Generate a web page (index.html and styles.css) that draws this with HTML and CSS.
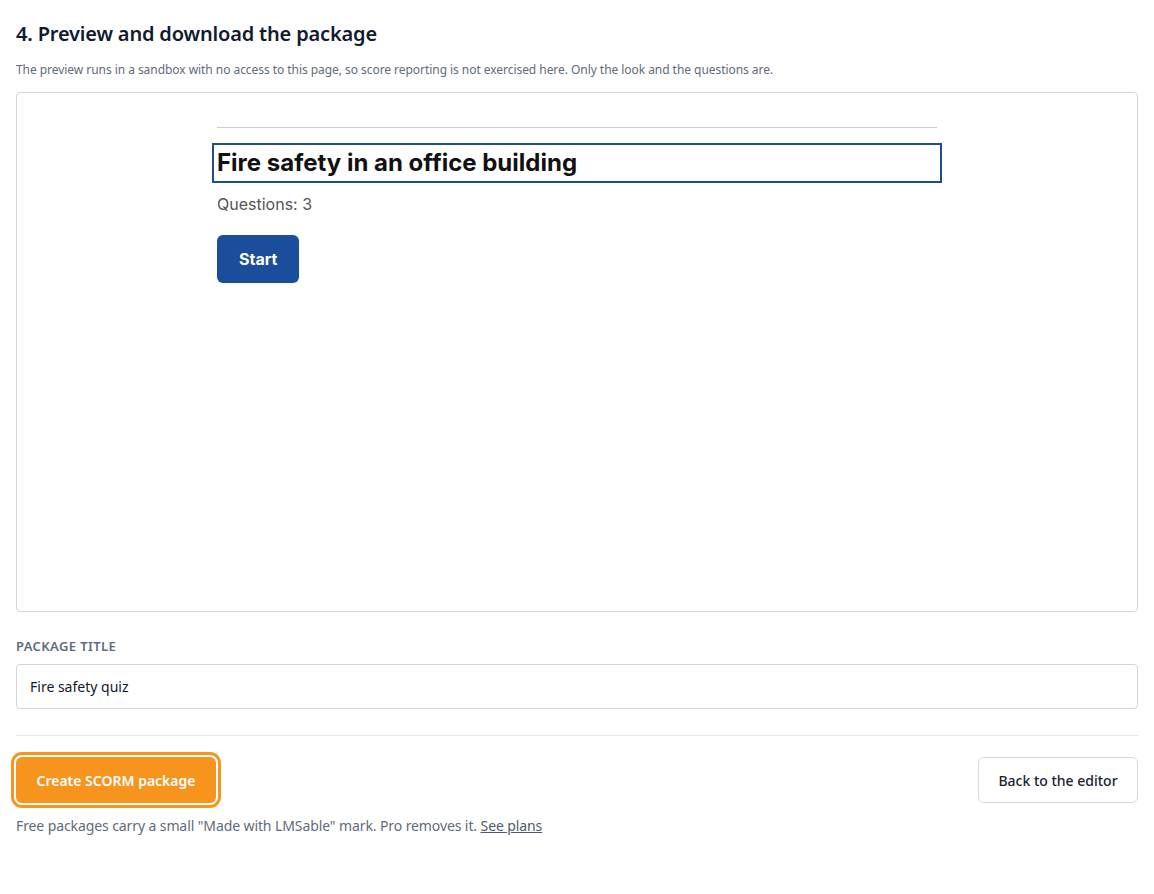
FILE: index.html
```html
<!DOCTYPE html>
<html lang="en">
<head>
<meta charset="utf-8">
<title>Preview and download the package</title>
<link rel="stylesheet" href="styles.css">
</head>
<body>
<main class="page">
  <h2 class="step-title">4. Preview and download the package</h2>
  <p class="step-note">The preview runs in a sandbox with no access to this page, so score reporting is not exercised here. Only the look and the questions are.</p>

  <div class="preview">
    <div class="quiz">
      <hr class="quiz-rule">
      <h1 class="quiz-title">Fire safety in an office building</h1>
      <p class="quiz-meta">Questions: 3</p>
      <button class="quiz-start" type="button">Start</button>
    </div>
  </div>

  <label class="field-label" for="pkg-title">Package title</label>
  <input class="field-input" id="pkg-title" type="text" value="Fire safety quiz">

  <hr class="divider">

  <div class="actions">
    <button class="btn btn-primary" type="button">Create SCORM package</button>
    <button class="btn btn-secondary" type="button">Back to the editor</button>
  </div>
  <p class="footnote">Free packages carry a small "Made with LMSable" mark. Pro removes it. <a href="#" class="footnote-link">See plans</a></p>
</main>
</body>
</html>
```

FILE: styles.css
```css
* { box-sizing: border-box; }

html, body {
  margin: 0;
  background: #ffffff;
}

body {
  font-family: "Noto Sans", "Open Sans", "Liberation Sans", sans-serif;
  color: #111827;
}

.page {
  padding: 20px 16px 40px;
  display: flex;
  flex-direction: column;
}

.step-title {
  margin: 0;
  font-size: 20px;
  line-height: 28px;
  font-weight: 600;
  letter-spacing: -0.17px;
  color: #111a2e;
}

.step-note {
  margin: 14px 0 14px;
  font-size: 12px;
  line-height: 16px;
  letter-spacing: -0.05px;
  color: #5f6b7a;
}

.preview {
  height: 520px;
  border: 1px solid #cfd6df;
  border-radius: 4px;
  background: #ffffff;
  padding: 34px 0 0;
}

.quiz {
  width: 720px;
  margin: 0 auto;
  font-family: Inter, "Liberation Sans", sans-serif;
}

.quiz-rule {
  margin: 0;
  border: 0;
  border-top: 1px solid #cccccc;
}

.quiz-title {
  margin: 20px 0 0;
  font-size: 24px;
  line-height: 30px;
  font-weight: 700;
  color: #111111;
  outline: 2px solid #1f4e8c;
  outline-offset: 3px;
}

.quiz-meta {
  margin: 14px 0 0;
  font-size: 16px;
  line-height: 24px;
  color: #555555;
}

.quiz-start {
  margin-top: 19px;
  height: 48px;
  padding: 0 22px;
  border: 0;
  border-radius: 6px;
  background: #1a4d9b;
  color: #ffffff;
  font-family: Inter, "Liberation Sans", sans-serif;
  font-size: 16px;
  font-weight: 700;
}

.field-label {
  margin-top: 26px;
  font-size: 13px;
  line-height: 16px;
  font-weight: 600;
  letter-spacing: 0.03em;
  text-transform: uppercase;
  color: #5d6b7e;
}

.field-input {
  margin-top: 10px;
  height: 45px;
  width: 100%;
  padding: 0 13px;
  border: 1px solid #cfd6df;
  border-radius: 4px;
  font-family: inherit;
  font-size: 14px;
  color: #111827;
  background: #ffffff;
}

.divider {
  margin: 26px 0 0;
  border: 0;
  border-top: 1px solid #e3e7ec;
}

.actions {
  margin-top: 21px;
  display: flex;
  justify-content: space-between;
  align-items: center;
}

.btn {
  height: 46px;
  border-radius: 6px;
  font-family: inherit;
  font-size: 14px;
  white-space: nowrap;
}

.btn-primary {
  background: #f7941d;
  color: #ffffff;
  border: 0;
  width: 200px;
  padding: 0 16px;
  font-weight: 600;
  outline: 3px solid #f7941d;
  outline-offset: 2px;
  box-shadow: 0 0 0 2px #ffffff;
}

.btn-secondary {
  background: #ffffff;
  color: #1a2233;
  border: 1px solid #d6dce4;
  width: 160px;
  padding: 0;
  font-weight: 500;
}

.footnote {
  margin: 13px 0 0;
  font-size: 14px;
  line-height: 20px;
  letter-spacing: -0.1px;
  color: #5f6b7a;
}

.footnote-link {
  color: #4f5b6b;
  text-decoration: underline;
}
```
